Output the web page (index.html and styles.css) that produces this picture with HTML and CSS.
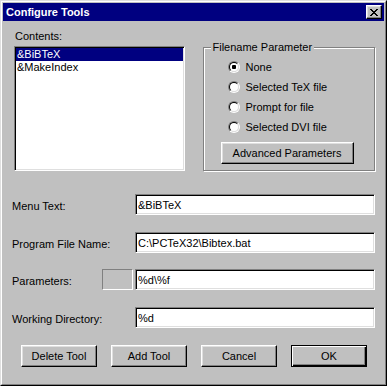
FILE: index.html
```html
<!DOCTYPE html>
<html lang="en">
<head>
  <meta charset="UTF-8">
  <title>Configure Tools</title>
  <link rel="stylesheet" href="styles.css">
</head>
<body>
  <div class="window">
    <div class="frame">
      <div class="titlebar">
        <span class="title">Configure Tools</span>
        <button class="close" type="button">
          <svg width="8" height="7" viewBox="0 0 8 7"><path d="M0 0h2v1h1v1h2v-1h1v-1h2v1h-1v1h-1v1h-1v1h1v1h1v1h1v1h-2v-1h-1v-1h-2v1h-1v1h-2v-1h1v-1h1v-1h1v-1h-1v-1h-1v-1h-1z" fill="#000"/></svg>
        </button>
      </div>
      <div class="body">
        <div class="top">
          <div class="contents">
            <div class="label">Contents:</div>
            <ul class="listbox">
              <li class="selected">&amp;BiBTeX</li>
              <li>&amp;MakeIndex</li>
            </ul>
          </div>
          <fieldset class="group">
            <legend>Filename Parameter</legend>
            <div class="radios">
              <label class="option"><span class="radio checked"></span>None</label>
              <label class="option"><span class="radio"></span>Selected TeX file</label>
              <label class="option"><span class="radio"></span>Prompt for file</label>
              <label class="option"><span class="radio"></span>Selected DVI file</label>
            </div>
            <button class="btn adv" type="button">Advanced Parameters</button>
          </fieldset>
        </div>
        <div class="fields">
          <span class="field-label">Menu Text:</span>
          <input class="edit" type="text" value="&amp;BiBTeX">
          <span class="field-label">Program File Name:</span>
          <input class="edit" type="text" value="C:\PCTeX32\Bibtex.bat">
          <span class="field-label">Parameters:</span>
          <span class="slot"></span>
          <input class="edit" type="text" value="%d\%f">
          <span class="field-label">Working Directory:</span>
          <input class="edit" type="text" value="%d">
        </div>
        <div class="actions">
          <button class="btn" type="button">Delete Tool</button>
          <button class="btn" type="button">Add Tool</button>
          <button class="btn" type="button">Cancel</button>
          <button class="btn default" type="button">OK</button>
        </div>
      </div>
    </div>
  </div>
</body>
</html>
```
FILE: styles.css
```css
body{
  margin: 0;
  background: #c0c0c0;
  font: 11px "Liberation Sans", Arial, sans-serif;
  color: #000;
}
.window{
  width: 387px;
  height: 386px;
  box-sizing: border-box;
  background: #c0c0c0;
  border: 1px solid;
  border-color: #dfdfdf #000 #000 #dfdfdf;
}
.frame{
  height: 100%;
  box-sizing: border-box;
  border: 1px solid;
  border-color: #fff #808080 #808080 #fff;
  padding: 1px;
}
.titlebar{
  height: 18px;
  background: #000080;
  color: #fff;
  display: flex;
  align-items: center;
  justify-content: space-between;
  padding: 0 2px 0 3px;
}
.title{
  font-weight: bold;
}
.close{
  width: 16px;
  height: 14px;
  box-sizing: border-box;
  padding: 0;
  background: #c0c0c0;
  border: 1px solid;
  border-color: #fff #000 #000 #fff;
  box-shadow: inset -1px -1px 0 #808080, inset 1px 1px 0 #dfdfdf;
  display: flex;
  align-items: center;
  justify-content: center;
}
.close svg{
  display: block;
}
.body{
  padding: 9px 9px 0 9px;
}
.top{
  display: flex;
  align-items: flex-start;
  gap: 18px;
  margin-left: 2px;
}
.contents{
  width: 171px;
}
.label{
  line-height: 13px;
  padding-left: 1px;
  margin-bottom: 3px;
}
.listbox{
  list-style: none;
  margin: 0;
  padding: 1px;
  height: 125px;
  box-sizing: border-box;
  background: #fff;
  border: 1px solid;
  border-color: #808080 #fff #fff #808080;
  box-shadow: inset 1px 1px 0 #000, inset -1px -1px 0 #dfdfdf;
}
.listbox li{
  line-height: 13px;
  padding-left: 1px;
}
.listbox .selected{
  background: #000080;
  color: #fff;
}
.group{
  width: 173px;
  height: 130px;
  box-sizing: border-box;
  margin: 11px 0 0;
  padding: 0;
  min-width: 0;
  border: 1px solid #808080;
  box-shadow: 1px 1px 0 #fff, inset 1px 1px 0 #fff;
}
.group legend{
  margin-left: 7px;
  padding: 0 2px;
  line-height: 13px;
  background: #c0c0c0;
}
.radios{
  margin-top: 3px;
  padding-left: 24px;
}
.option{
  display: flex;
  align-items: center;
  gap: 6px;
  height: 20px;
}
.radio{
  flex: none;
  width: 12px;
  height: 12px;
  box-sizing: border-box;
  border-radius: 50%;
  border: 1px solid;
  border-color: #808080 #fff #fff #808080;
}
.radio::before{
  content: "";
  display: block;
  width: 10px;
  height: 10px;
  box-sizing: border-box;
  border-radius: 50%;
  border: 1px solid;
  border-color: #000 #dfdfdf #dfdfdf #000;
  background: #fff;
}
.radio.checked::before{
  background: radial-gradient(circle, #000 0 2px, #fff 2.5px);
}
.btn{
  width: 76px;
  height: 22px;
  box-sizing: border-box;
  padding: 0;
  font: inherit;
  color: #000;
  background: #c0c0c0;
  border: 1px solid;
  border-color: #fff #000 #000 #fff;
  box-shadow: inset -1px -1px 0 #808080, inset 1px 1px 0 #dfdfdf;
}
.btn.adv{
  width: 133px;
  margin: 5px 0 0 17px;
}
.btn.default{
  border-color: #000;
  box-shadow: inset 1px 1px 0 #fff, inset -1px -1px 0 #000, inset -2px -2px 0 #808080;
}
.fields{
  margin-top: 23px;
  display: grid;
  grid-template-columns: 90px 33px 240px;
  grid-template-rows: 38px 37px 38px 21px;
  align-items: start;
}
.field-label{
  grid-column: 1;
  white-space: nowrap;
  line-height: 21px;
  padding-top: 2px;
}
.slot{
  grid-column: 2;
  width: 31px;
  height: 21px;
  box-sizing: border-box;
  border: 1px solid;
  border-color: #808080 #fff #fff #808080;
}
.edit{
  grid-column: 3;
  width: 240px;
  height: 21px;
  box-sizing: border-box;
  margin: 0;
  padding: 0 2px;
  font: inherit;
  color: #000;
  background: #fff;
  border: 1px solid;
  border-color: #808080 #fff #fff #808080;
  box-shadow: inset 1px 1px 0 #000, inset -1px -1px 0 #dfdfdf;
  outline: none;
}
.actions{
  display: flex;
  gap: 14px;
  margin-top: 17px;
  padding-left: 9px;
}
```
